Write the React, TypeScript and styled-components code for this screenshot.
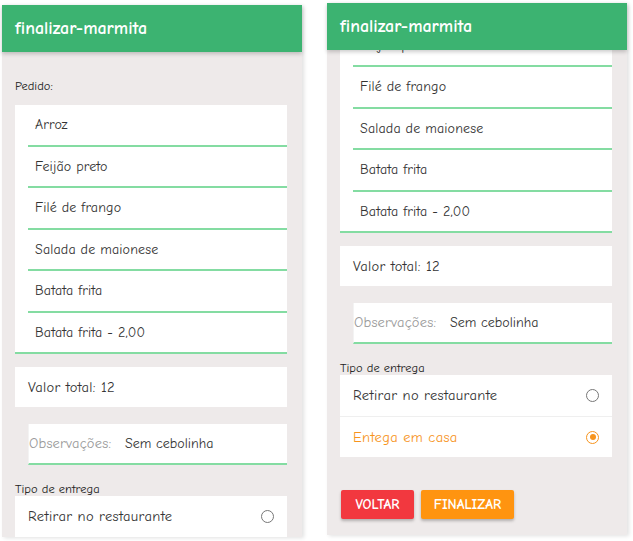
import React, { useLayoutEffect, useRef } from "react";
import styled, { createGlobalStyle } from "styled-components";

const FONT = `"Comic Sans MS", "Comic Neue", "Open Sans", sans-serif`;

const GlobalStyle = createGlobalStyle`
  html, body {
    margin: 0;
    padding: 0;
    background: #ffffff;
    font-family: ${FONT};
  }
  * { box-sizing: border-box; }
`;

const Page = styled.div`
  display: flex;
  align-items: flex-start;
  gap: 25px;
  padding-left: 2px;
  width: 633px;
  height: 541px;
  overflow: hidden;
`;

const Screen = styled.div<{ $top: number }>`
  margin-top: ${(p) => p.$top}px;
  width: 300px;
  height: 532px;
  display: flex;
  flex-direction: column;
  background: #eeeaea;
  box-shadow: 2px 1px 4px rgba(0, 0, 0, 0.12);
`;

const Header = styled.header`
  flex-shrink: 0;
  height: 47px;
  display: flex;
  align-items: center;
  padding-left: 13px;
  background: #3cb371;
  color: #ffffff;
  font-size: 18px;
  font-weight: 700;
  box-shadow: 0 2px 4px rgba(0, 0, 0, 0.2);
  position: relative;
  z-index: 1;
`;

const Scroller = styled.div`
  flex: 1;
  overflow-y: auto;
  scrollbar-width: none;
  padding: 27px 15px 16px 13px;
  &::-webkit-scrollbar { display: none; }
`;

const SmallLabel = styled.div<{ $mt?: number; $mb?: number }>`
  font-size: 12.5px;
  line-height: 14px;
  color: #222;
  margin-top: ${(p) => p.$mt ?? 0}px;
  margin-bottom: ${(p) => p.$mb ?? 0}px;
`;

const Card = styled.div<{ $mt?: number }>`
  background: #ffffff;
  margin-top: ${(p) => p.$mt ?? 0}px;
`;

const ItemRow = styled.div<{ $last?: boolean }>`
  height: 41.5px;
  display: flex;
  align-items: center;
  margin-left: ${(p) => (p.$last ? 0 : 13)}px;
  padding-left: ${(p) => (p.$last ? 20 : 7)}px;
  border-bottom: 2px solid #84dca2;
  font-size: 14px;
  letter-spacing: 0.15px;
  color: #333;
`;

const TotalCard = styled(Card)`
  height: 40px;
  display: flex;
  align-items: center;
  padding-left: 13px;
  font-size: 14.5px;
  letter-spacing: 0.3px;
  color: #333;
`;

const NoteField = styled.div`
  margin: 17px 0 0 13px;
  height: 41px;
  display: flex;
  align-items: center;
  background: #ffffff;
  border-left: 1px solid #f3f3f3;
  border-bottom: 2px solid #84dca2;
  font-size: 14px;
`;

const NoteLabel = styled.span`
  color: #9a9a9a;
  width: 96px;
  font-size: 14.5px;
  letter-spacing: 0.2px;
`;

const NoteValue = styled.span`
  color: #333;
`;

const OptionRow = styled.div<{ $active?: boolean; $first?: boolean }>`
  height: 41px;
  display: flex;
  align-items: center;
  justify-content: space-between;
  padding: 0 13px 0 13px;
  font-size: 14.5px;
  letter-spacing: 0.35px;
  color: ${(p) => (p.$active ? "#f7941d" : "#333")};
  border-top: ${(p) => (p.$first ? "none" : "1px solid #efefef")};
`;

const RadioMark = styled.span<{ $checked?: boolean }>`
  width: 13px;
  height: 13px;
  border-radius: 50%;
  border: 1.5px solid ${(p) => (p.$checked ? "#f7941d" : "#777")};
  display: flex;
  align-items: center;
  justify-content: center;
  &::after {
    content: "";
    width: 6px;
    height: 6px;
    border-radius: 50%;
    background: ${(p) => (p.$checked ? "#f7941d" : "transparent")};
  }
`;

const ButtonBar = styled.div`
  display: flex;
  gap: 7px;
  margin-top: 33px;
  padding-left: 1px;
`;

const ActionButton = styled.button<{ $tone: "red" | "orange"; $w: number }>`
  width: ${(p) => p.$w}px;
  height: 29px;
  border: none;
  border-radius: 2px;
  background: ${(p) => (p.$tone === "red" ? "#f2383f" : "#ff9410")};
  color: #ffffff;
  font-family: ${FONT};
  font-size: 14px;
  font-weight: 700;
  text-transform: uppercase;
  box-shadow: 0 2px 3px rgba(0, 0, 0, 0.25);
  padding: 0;
`;

const items = [
  "Arroz",
  "Feijão preto",
  "Filé de frango",
  "Salada de maionese",
  "Batata frita",
  "Batata frita - 2,00",
];

const deliveryOptions = [
  { label: "Retirar no restaurante", value: "retirar" },
  { label: "Entega em casa", value: "casa" },
];

function OrderScreen({ top, toEnd }: { top: number; toEnd?: boolean }) {
  const scroller = useRef<HTMLDivElement>(null);
  useLayoutEffect(() => {
    if (toEnd && scroller.current) {
      scroller.current.scrollTop = scroller.current.scrollHeight;
    }
  }, [toEnd]);

  const selected = "casa";

  return (
    <Screen $top={top}>
      <Header>finalizar-marmita</Header>
      <Scroller ref={scroller}>
        <SmallLabel $mb={12}>Pedido:</SmallLabel>
        <Card>
          {items.map((it, i) => (
            <ItemRow key={it} $last={i === items.length - 1}>
              {it}
            </ItemRow>
          ))}
        </Card>
        <TotalCard $mt={13}>Valor total: 12</TotalCard>
        <NoteField>
          <NoteLabel>Observações:</NoteLabel>
          <NoteValue>Sem cebolinha</NoteValue>
        </NoteField>
        <SmallLabel $mt={17}>Tipo de entrega</SmallLabel>
        <Card>
          {deliveryOptions.map((o, i) => (
            <OptionRow key={o.value} $first={i === 0} $active={o.value === selected}>
              {o.label}
              <RadioMark $checked={o.value === selected} />
            </OptionRow>
          ))}
        </Card>
        <ButtonBar>
          <ActionButton $tone="red" $w={73}>Voltar</ActionButton>
          <ActionButton $tone="orange" $w={93}>Finalizar</ActionButton>
        </ButtonBar>
      </Scroller>
    </Screen>
  );
}

export default function App() {
  return (
    <>
      <GlobalStyle />
      <Page>
        <OrderScreen top={5} />
        <OrderScreen top={3} toEnd />
      </Page>
    </>
  );
}
